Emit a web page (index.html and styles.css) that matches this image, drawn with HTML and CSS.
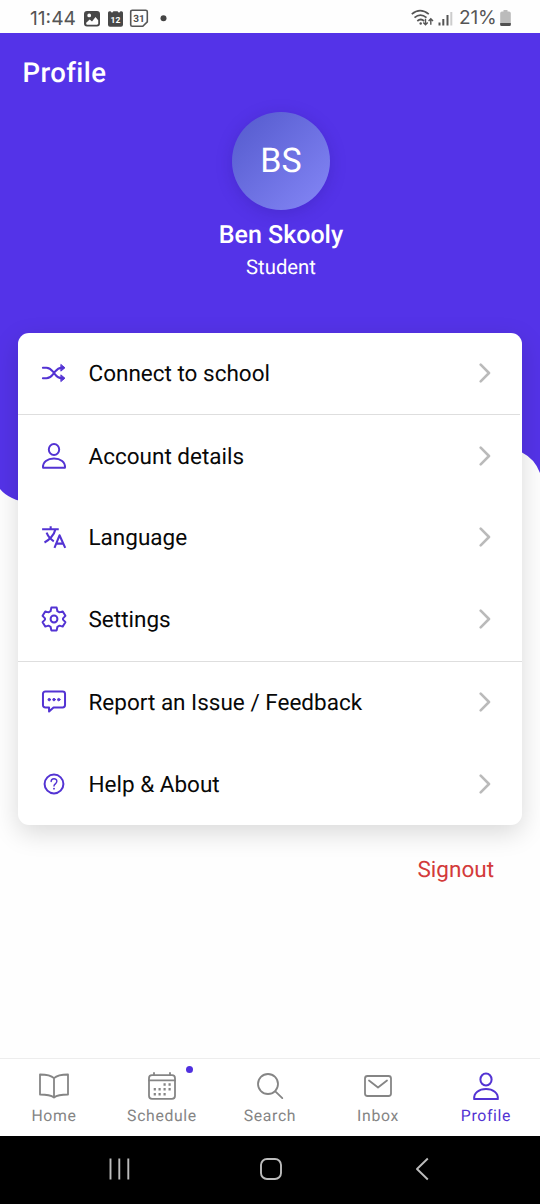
FILE: index.html
```html
<!DOCTYPE html>
<html lang="en">
<head>
<meta charset="utf-8">
<title>Profile</title>
<link rel="stylesheet" href="styles.css">
</head>
<body>
<svg class="defs" width="0" height="0" aria-hidden="true">
  <symbol id="user" viewBox="0 0 28 28"><ellipse cx="14" cy="7" rx="5.6" ry="6"/><path d="M2.200 26.600C1.600 20.500 7 16.600 14 16.600s12.400 3.900 11.800 10Z"/></symbol>
  <symbol id="chevron" viewBox="0 0 12 20"><path d="M1.700 1.700 10 10l-8.300 8.300"/></symbol>
</svg>
<div class="phone">
  <header class="status">
    <span class="time">11:44</span>
    <svg class="status-left" viewBox="0 0 84 20">
      <path fill="#484848" fill-rule="evenodd" d="M3 2h10a3 3 0 0 1 3 3v9.500a3 3 0 0 1-3 3H3a3 3 0 0 1-3-3V5a3 3 0 0 1 3-3ZM2.200 14.500c0 .8.300 1.200 1 1.200h10c.6 0 1-.4 1-1.200v-3.300L11.500 8 8 12.500l-2.300-2-3.500 3.200ZM5.200 4.500a1.900 1.900 0 1 0 0 3.800 1.900 1.900 0 0 0 0-3.800Z"/>
      <path fill="#484848" d="M24 3.700q0-1.500 1.500-1.500h1l1.500 1.500 1.500-1.500h4l1.500 1.500 1.500-1.500h1q1.500 0 1.500 1.500v12q0 2-2 2H26q-2 0-2-2Z"/>
      <text class="cal12" x="31.500" y="13.800">12</text>
      <path fill="none" stroke="#555" stroke-width="1.600" d="M48.300 1.200h13.400q1.600 0 1.600 1.600v10l-4.500 4.500H48.300q-1.600 0-1.600-1.600V2.800q0-1.600 1.600-1.600Z"/>
      <text class="cal31" x="55" y="13">31</text>
      <circle cx="79.500" cy="9.300" r="3" fill="#444"/>
    </svg>
    <span class="spacer"></span>
    <svg class="status-signal" viewBox="0 0 42 20">
      <g fill="none" stroke="#555" stroke-width="1.700"><path d="M.8 5.200Q9-1.800 17.800 5.200M3.500 8.700q5.900-5 12 0M6.300 12q3.500-3 6.800 0"/><path stroke-width="1.400" d="M14.500 9.800v6M12.300 13.500l2.200 2.300 2.200-2.300M19.800 15.800v-6M17.600 12l2.200-2.300 2.200 2.300"/></g>
      <circle cx="9.700" cy="14.500" r="1.200" fill="#555"/>
      <path stroke="#555" stroke-width="2" d="M28.500 16.500v-3M32.300 16.500V10M36.500 16.500V6"/><path stroke="#ccc" stroke-width="2" d="M40.300 16.500V3"/>
    </svg>
    <span class="percent">21%</span>
    <svg class="battery" viewBox="0 0 12 17"><path fill="#bbb" d="M3.500 0h4v1.500h1.500q1.800 0 1.800 1.800V14.500q0 1.500-1.500 1.500H1.700Q.2 16 .2 14.500V3.300q0-1.800 1.800-1.800h1.500Z"/><path fill="#505050" d="M.2 13h10.600v1.500q0 1.500-1.500 1.500H1.700Q.2 16 .2 14.500Z"/></svg>
  </header>

  <main class="page">
    <svg class="backdrop" viewBox="0 0 540 480"><path fill="#5433e8" d="M0 0h540v440Q535 426 522 419.500L490 409 30 470Q9 467 0 456Z"/></svg>
    <h1 class="title">Profile</h1>
    <section class="person">
      <div class="avatar">BS</div>
      <div class="name">Ben Skooly</div>
      <div class="role">Student</div>
    </section>
    <nav class="card">
      <a class="row">
        <svg class="icon" viewBox="0 0 28 28"><path d="M2.300 8.500H6c4.300 0 5.500 2.500 8 5.500s3.700 5.500 8 5.500h2M2.300 19.500H6c4.300 0 5.500-2.500 8-5.500s3.700-5.500 8-5.500h2"/><path class="solid" d="m21.500 5.200 4 3.300-4 3.300ZM21.500 16.200l4 3.300-4 3.300Z"/></svg>
        <span class="label">Connect to school</span><svg class="chev"><use href="#chevron"/></svg></a>
      <hr class="rule short">
      <a class="row"><svg class="icon person-icon"><use href="#user"/></svg>
        <span class="label">Account details</span><svg class="chev"><use href="#chevron"/></svg></a>
      <a class="row">
        <svg class="icon language" viewBox="0 0 28 28"><path d="M1.500 5.900h17.500M10.500 2.600v3.300M15.500 5.900C14.300 12 8.500 17.500 4 19.800M6.200 9.500c1.600 4 4.300 7 7.600 9M14.500 25.500l5.300-13.300L25.800 25.500M16.200 21h7.300"/></svg>
        <span class="label">Language</span><svg class="chev"><use href="#chevron"/></svg></a>
      <a class="row">
        <svg class="icon" viewBox="0 0 28 28"><path d="M11.200 2h5.600l.8 3.800 2.200 1.200 3.400-1 2.800 4.700-2.500 2.600v1.400l2.500 2.600-2.800 4.700-3.400-1-2.200 1.200-.8 3.800h-5.600l-.8-3.800-2.200-1.200-3.400 1L2 17.300l2.500-2.600v-1.400L2 10.700 4.800 6l3.400 1 2.200-1.200Z"/><circle cx="14" cy="14" r="3.600"/></svg>
        <span class="label">Settings</span><svg class="chev"><use href="#chevron"/></svg></a>
      <hr class="rule">
      <a class="row">
        <svg class="icon" viewBox="0 0 28 28"><path d="M5 3h18q2.600 0 2.600 2.600v11.500q0 2.600-2.600 2.600H13.500L8.800 24V19.700H5q-2.600 0-2.600-2.600V5.600Q2.400 3 5 3Z"/><g class="solid"><circle cx="9" cy="11.500" r="1.300"/><circle cx="14" cy="11.500" r="1.300"/><circle cx="19" cy="11.500" r="1.300"/></g></svg>
        <span class="label">Report an Issue / Feedback</span><svg class="chev"><use href="#chevron"/></svg></a>
      <a class="row">
        <svg class="icon" viewBox="0 0 28 28"><circle cx="14" cy="14" r="9.900"/><path stroke-width="1.500" d="M11 11.500c0-4 6-3.900 6-.3 0 2.700-3 2.500-3 5"/><circle class="solid dot" cx="14" cy="18.900" r="1"/></svg>
        <span class="label">Help &amp; About</span><svg class="chev"><use href="#chevron"/></svg></a>
    </nav>
    <a class="signout">Signout</a>
  </main>

  <nav class="tabs">
    <a class="tab"><svg viewBox="0 0 32 32"><path d="M16 8.200C12.500 4.800 8 4.500 2 4.500v20c6 0 10.500.3 14 3 3.500-2.700 8-3 14-3v-20c-6 0-10.500.3-14 3.700v19"/></svg><span>Home</span></a>
    <a class="tab"><svg viewBox="0 0 32 32"><rect x="3" y="5.200" width="26" height="23.600" rx="3"/><path d="M3 10.300h26M8 5V3M24 5V3"/><path class="dates" d="M17.500 14.500h2.200m2.800 0h2.200M7.700 19.300h2.200m2.600 0h2.200m2.800 0h2.200m2.800 0h2.200M7.700 24.200h2.200m2.600 0h2.200m2.800 0h2.200"/></svg><i class="badge"></i><span>Schedule</span></a>
    <a class="tab"><svg viewBox="0 0 32 32"><circle cx="14" cy="14" r="10"/><path d="m21.300 21.300 7 6.800"/></svg><span>Search</span></a>
    <a class="tab"><svg viewBox="0 0 32 32"><rect x="3" y="6" width="26" height="20" rx="2.500"/><path d="m7 10.500 9 7 9-7"/></svg><span>Inbox</span></a>
    <a class="tab active"><svg class="profile"><use href="#user"/></svg><span>Profile</span></a>
  </nav>
  <footer class="system">
    <svg viewBox="0 0 24 24"><path d="M2.500 1.500v21M11.300 1.500v21M20.300 1.500v21"/></svg>
    <svg viewBox="0 0 24 24"><rect x="2" y="2" width="20" height="20" rx="6"/></svg>
    <svg viewBox="0 0 24 24"><path d="M17.800 1.500 7 12l10.800 10.500"/></svg>
  </footer>
</div>
</body>
</html>
```
FILE: styles.css
```css
* { box-sizing: border-box; }
body { margin: 0; font-family: Roboto, sans-serif; background: #fefefe; text-rendering: geometricPrecision; }
.defs { position: absolute; }
.phone { width: 540px; height: 1204px; display: flex; flex-direction: column; overflow: hidden; }
.status { height: 33px; display: flex; align-items: center; padding: 4px 28px 0 30px; color: #555; font-family: Inter, sans-serif; font-size: 19.2px; }
.time { width: 54px; margin-top: -2px; white-space: nowrap; }
.status-left { width: 84px; height: 20px; }
.cal12, .cal31 { text-anchor: middle; font-family: Roboto, sans-serif; font-weight: 700; }
.cal12 { fill: #fff; font-size: 8.500px; }
.cal31 { fill: #505050; font-size: 10px; }
.spacer { flex: 1; }
.status-signal { width: 42px; height: 20px; margin-right: 6px; }
.percent { width: 41px; margin-top: -2px; font-size: 19px; letter-spacing: -.2px; }
.battery { width: 12px; height: 17px; }
.page { height: 1025px; position: relative; isolation: isolate; display: flex; flex-direction: column; }
.backdrop { position: absolute; z-index: -1; top: 0; left: 0; width: 540px; height: 480px; }
.title { margin: 0; height: 79px; padding: 23px 22.500px 0; color: #fff; font-size: 27.500px; line-height: 34px; font-weight: 500; letter-spacing: .4px; }
.person { height: 220.500px; display: flex; flex-direction: column; align-items: center; padding-left: 22px; color: #fff; }
.avatar { width: 98px; height: 98px; border-radius: 50%; background: linear-gradient(135deg, #5359cc, #8587f7); box-shadow: 0 3px 16px #2a168c44; font-size: 34px; line-height: 98px; text-align: center; }
.name { margin-top: 10px; font-size: 25px; line-height: 31px; font-weight: 500; }
.role { margin-top: 1px; font-size: 20.300px; line-height: 31px; }
.card { flex: none; margin: 0 18px; height: 492.500px; border-radius: 11px; background: #fff; box-shadow: 0 8px 26px #00000026; display: flex; flex-direction: column; }
.row { flex: 1; display: flex; align-items: center; padding: 0 31px 1px 22px; color: #080808; }
.icon { width: 28px; height: 28px; padding: .7px; }
.person-icon { padding: 0 1px; }
.icon, .profile { fill: none; stroke: #5333d3; stroke-width: 2.100; stroke-linejoin: round; stroke-linecap: round; }
.language { stroke-width: 2.200; stroke-linecap: butt; }
.solid { fill: #5333d3; stroke-width: 1; }
.dot { stroke: none; }
.label { flex: 1; margin-left: 20.500px; padding-top: 2px; font-size: 22.500px; line-height: 30px; }
.chev { width: 12px; height: 20px; fill: none; stroke: #bababa; stroke-width: 2.600; stroke-linecap: round; stroke-linejoin: round; }
.rule { width: 100%; height: 1px; border: 0; margin: 0; background: #dedede; }
.short { width: 502px; }
.signout { align-self: flex-end; margin: 30px 46px 0; color: #d33a3a; font-size: 22.500px; line-height: 30px; }
.tabs { height: 78px; display: grid; grid-template-columns: repeat(5, 1fr); border-top: 1px solid #ededed; background: #fff; }
.tab { position: relative; display: flex; flex-direction: column; align-items: center; padding-top: 11px; color: #858585; font-size: 15.800px; line-height: 20px; letter-spacing: .65px; }
.tab svg { width: 32px; height: 32px; margin-bottom: 4px; fill: none; stroke: #858585; stroke-width: 1.800; stroke-linecap: round; stroke-linejoin: round; }
.tab .dates { stroke-width: 2.500; stroke-linecap: butt; }
.tab .profile { width: 28px; height: 29px; margin: 2px 0 5px; stroke: #5333d3; stroke-width: 2; }
.tab.active { color: #5333d3; }
.badge { position: absolute; left: 78px; top: 7px; width: 7px; height: 7px; border-radius: 50%; background: #5030df; }
.system { height: 68px; background: #000; display: flex; justify-content: space-between; padding: 21px 106px 0 108px; }
.system svg { width: 24px; height: 24px; fill: none; stroke: #bcbcbc; stroke-width: 1.900; stroke-linejoin: round; }
```
